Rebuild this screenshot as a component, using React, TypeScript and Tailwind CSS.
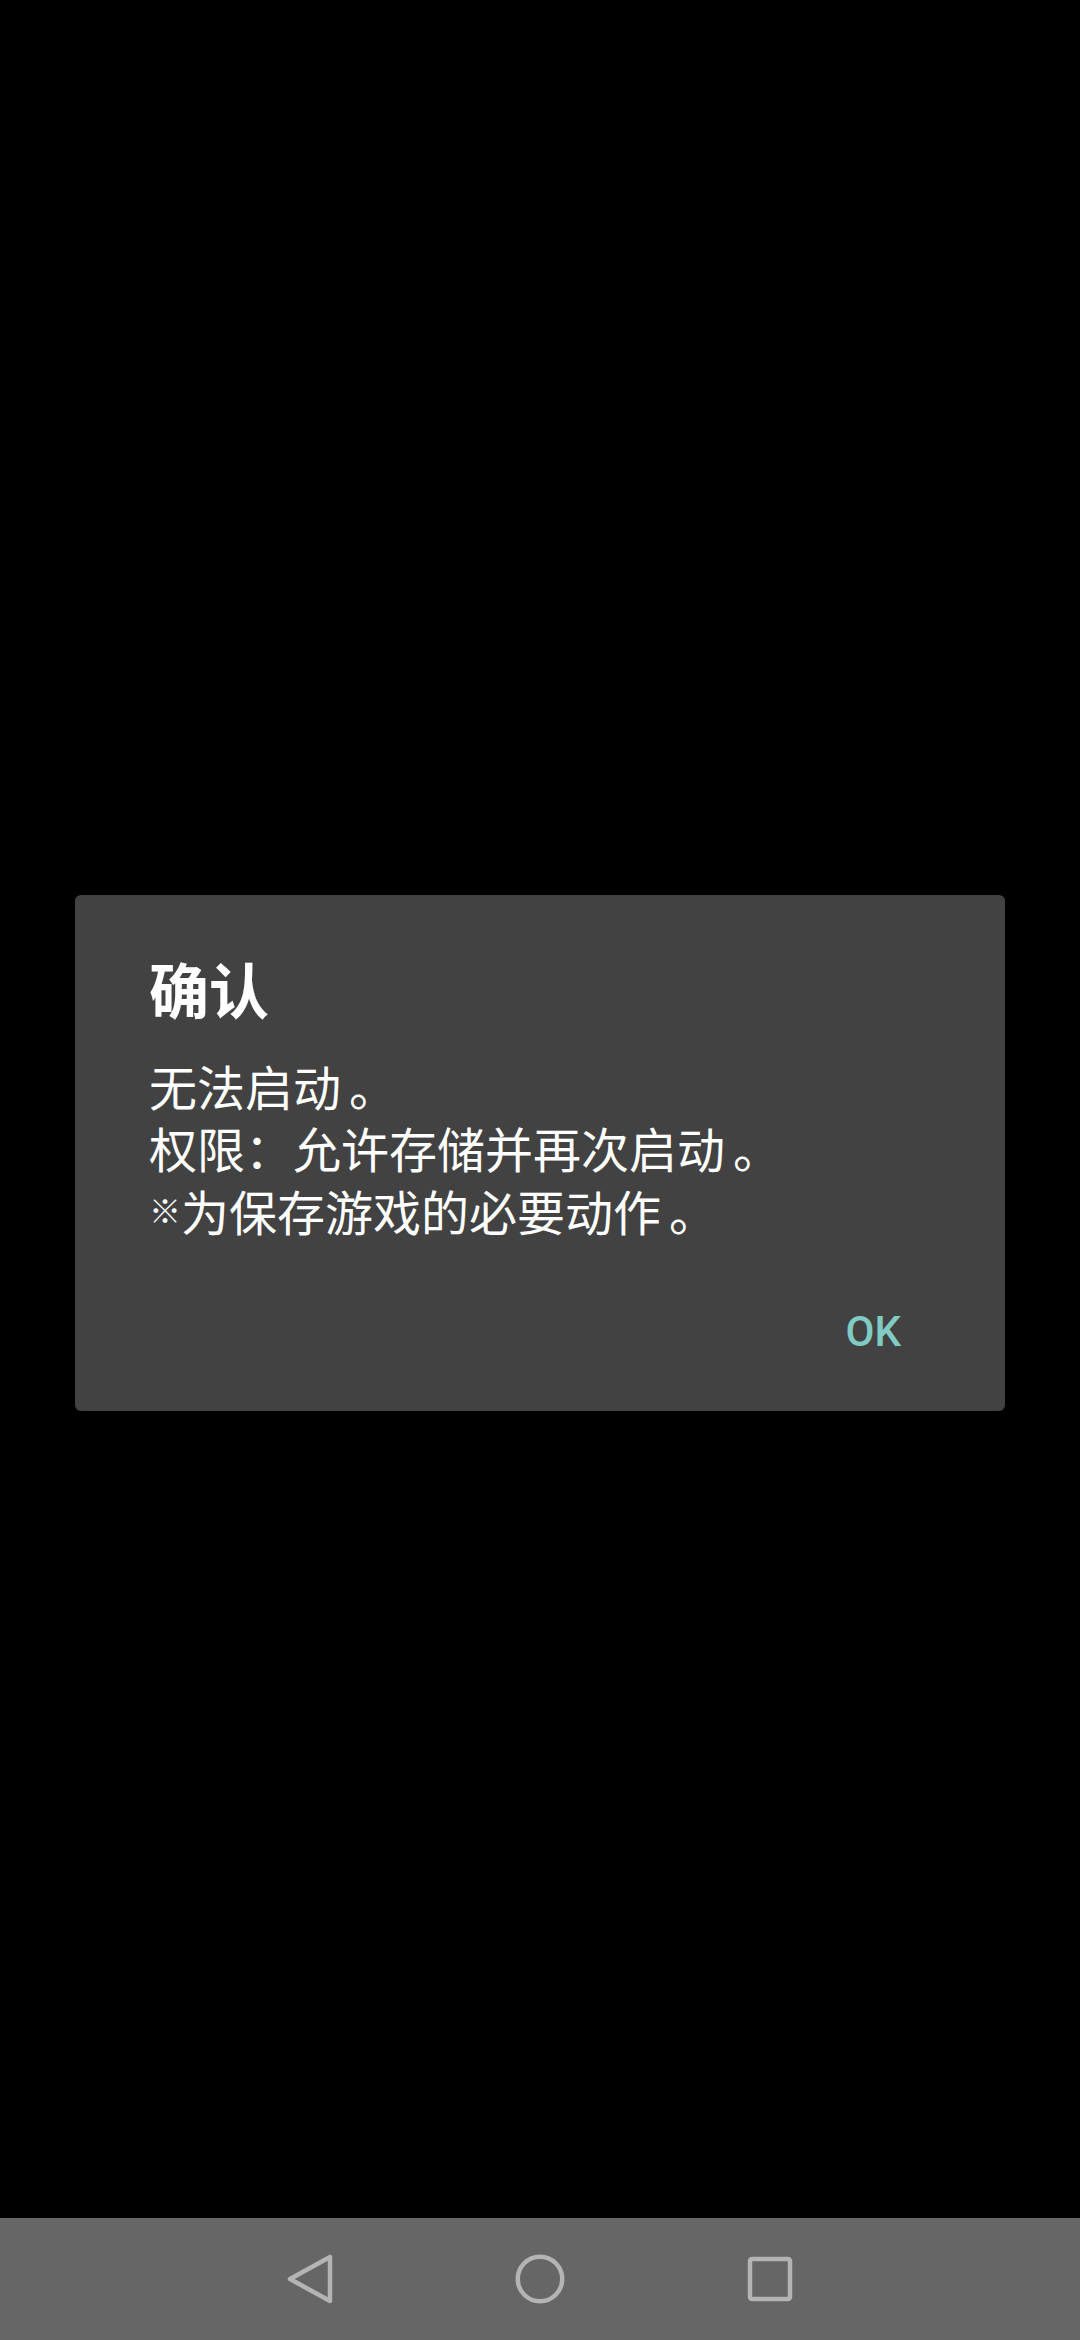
import React from 'react'

const cjk = { fontFamily: '"Noto Sans CJK SC", "Noto Sans", sans-serif' }

function NavBar() {
  return (
    <div className="h-[122px] bg-[#666666] flex items-center justify-center">
      <div className="flex items-center gap-[176px]">
        <svg width="52" height="60" viewBox="0 0 52 60" fill="none">
          <path
            d="M46 8 L46 52 L6 30 Z"
            stroke="#b4b4b4"
            strokeWidth="4.5"
            strokeLinejoin="round"
          />
        </svg>
        <svg width="56" height="56" viewBox="0 0 56 56" fill="none">
          <circle cx="28" cy="28" r="22.25" stroke="#b4b4b4" strokeWidth="4.5" />
        </svg>
        <svg width="52" height="52" viewBox="0 0 52 52" fill="none">
          <rect x="6" y="6" width="40" height="40" rx="2" stroke="#b4b4b4" strokeWidth="4.5" />
        </svg>
      </div>
    </div>
  )
}

function Stop() {
  return <span className="inline-block ml-[8px] leading-[62.5px]">。</span>
}

export default function App() {
  return (
    <div className="w-[1080px] h-[2340px] bg-black flex flex-col">
      {/* status bar (hidden, black) */}
      <div className="h-[88px]" />

      <div className="flex-1 flex items-center justify-center">
        <div className="w-[930px] bg-[#424242] rounded-[6px] pt-[63px] pb-[58px] px-[74px]">
          <h2 className="text-white text-[60px] leading-[60px] font-bold" style={cjk}>
            确认
          </h2>
          <div className="mt-[36px] text-white text-[48px] leading-[62.5px]" style={cjk}>
            <p className="h-[62.5px]">
              无法启动<Stop />
            </p>
            <p className="h-[62.5px]">
              权限：允许存储并再次启动<Stop />
            </p>
            <p className="h-[62.5px]">
              <span className="inline-block w-[32px] text-[32px] leading-none font-bold text-center align-[8px]">
                ※
              </span>
              为保存游戏的必要动作<Stop />
            </p>
          </div>
          <div className="mt-[70px] flex justify-end">
            <button
              className="text-[#80cbc4] text-[42px] leading-[42px] font-medium mr-[30px]"
              style={{ fontFamily: 'Roboto, "Noto Sans", sans-serif' }}
            >
              OK
            </button>
          </div>
        </div>
      </div>

      <NavBar />
    </div>
  )
}
